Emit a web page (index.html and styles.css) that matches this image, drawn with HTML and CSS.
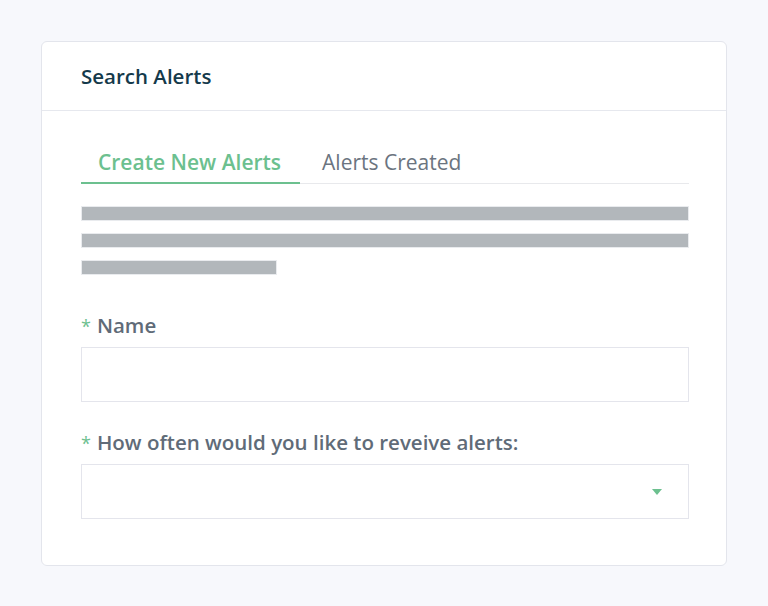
FILE: index.html
```html
<!DOCTYPE html>
<html lang="en">
<head>
  <meta charset="UTF-8">
  <title>Search Alerts</title>
  <link rel="stylesheet" href="styles.css">
</head>
<body>
  <div class="card">
    <div class="card-header">Search Alerts</div>
    <div class="card-body">
      <div class="tabs">
        <div class="tab active">Create New Alerts</div>
        <div class="tab">Alerts Created</div>
      </div>

      <div class="placeholder">
        <div class="bar"></div>
        <div class="bar"></div>
        <div class="bar short"></div>
      </div>

      <div class="field">
        <label><span class="req">*</span>Name</label>
        <div class="input"></div>
      </div>

      <div class="field">
        <label><span class="req">*</span>How often would you like to reveive alerts:</label>
        <div class="input select">
          <span class="caret"></span>
        </div>
      </div>
    </div>
  </div>
</body>
</html>
```

FILE: styles.css
```css
body {
  margin: 0;
  background-color: #f7f8fc;
  font-family: "Open Sans", Lato, sans-serif;
}
.card {
  width: 684px;
  height: 523px;
  margin: 41px 0 0 41px;
  background: white;
  border: 1px solid #e3e5ec;
  border-radius: 6px;
}
.card-header {
  height: 68px;
  line-height: 68px;
  padding-left: 39px;
  border-bottom: 1px solid #e6e8ee;
  color: #143a4b;
  font-size: 20.5px;
  font-weight: 600;
}
.card-body {
  padding: 29px 37px 0 39px;
}
.tabs {
  display: flex;
  border-bottom: 1px solid #e8e9ec;
}
.tab {
  padding: 0 17px;
  height: 42px;
  line-height: 44px;
  font-size: 21px;
  color: #6b7480;
  margin-bottom: -1px;
}
.tab.active {
  color: #6cc08f;
  font-weight: 600;
  border-bottom: 2px solid #6cc08f;
  padding-right: 19px;
  margin-right: 5px;
}
.placeholder {
  padding-top: 22px;
}
.bar {
  height: 13px;
  background: #b2b7bb;
  border: 1px solid #e9ebee;
  margin-bottom: 12px;
}
.bar.short {
  width: 194px;
}
.field {
  margin-top: 37px;
}
.field + .field {
  margin-top: 27px;
}
label {
  display: block;
  height: 26px;
  font-size: 20.5px;
  font-weight: 600;
  color: #606b78;
  line-height: 26px;
  margin-bottom: 9px;
}
.req {
  color: #6cc08f;
  font-weight: 400;
  font-size: 18px;
  line-height: 0;
  margin-right: 6px;
}
.input {
  height: 53px;
  border: 1px solid #e4e5ec;
  position: relative;
}
.caret {
  position: absolute;
  right: 26px;
  top: 24px;
  border-left: 5px solid transparent;
  border-right: 5px solid transparent;
  border-top: 6px solid #6cc08f;
}
```
